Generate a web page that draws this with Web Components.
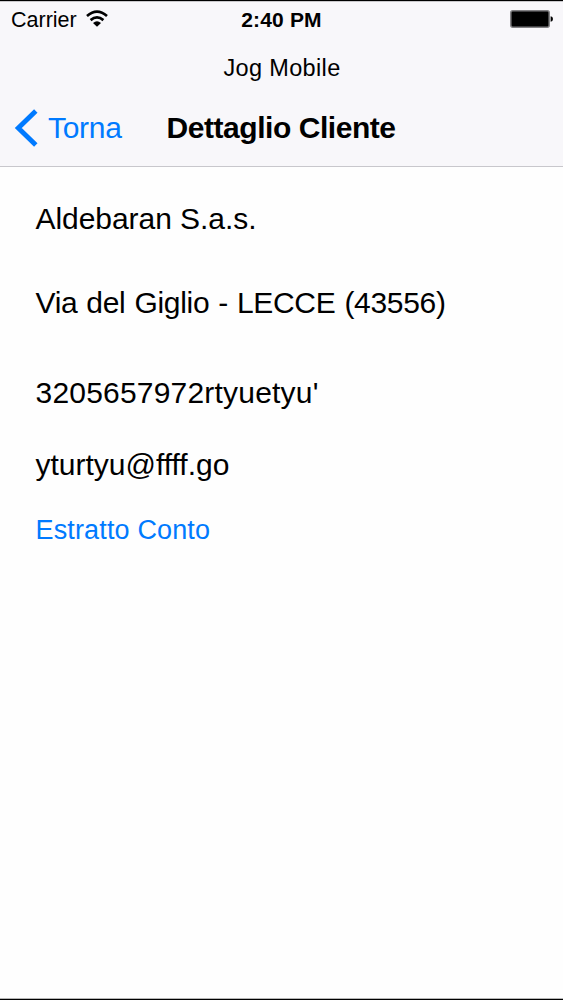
<!DOCTYPE html>
<html lang="it">
<head>
<meta charset="utf-8">
<title>Jog Mobile</title>
<style>
  html, body {
    margin: 0;
    height: 100%;
  }

  body {
    background: #000;
    overflow: hidden;
    font-family: "Liberation Sans", Arial, sans-serif;
    color: #000;
  }
</style>
</head>
<body>
<phone-screen>
  <status-bar slot="top" carrier="Carrier" time="2:40 PM"></status-bar>
  <nav-bar slot="top" back="Torna">
    <span slot="prompt">Jog Mobile</span>
    Dettaglio Cliente
  </nav-bar>
  <detail-row style="--gap: 34px; --tracking: -0.05px">Aldebaran S.a.s.</detail-row>
  <detail-row style="--gap: 48px; --tracking: -0.32px; word-spacing: 1px">Via del Giglio - LECCE (43556)</detail-row>
  <detail-row style="--gap: 54px; --tracking: 0.2px">3205657972rtyuetyu'</detail-row>
  <detail-row style="--gap: 36px">yturtyu@ffff.go</detail-row>
  <detail-row kind="link" style="--gap: 29px; --tracking: 0.15px">Estratto Conto</detail-row>
</phone-screen>

<script>
class PhoneScreen extends HTMLElement {
  constructor() {
    super();
    this.attachShadow({ mode: "open" });
    this.shadowRoot.innerHTML = `
      <style>
        :host {
          display: flex;
          flex-direction: column;
          box-sizing: border-box;
          width: 100%;
          height: 100%;
          border-top: 1px solid #000;
          border-bottom: 1px solid #000;
          background: #fefefe;
        }

        header {
          box-sizing: border-box;
          height: 166px;
          background: #f8f7fa;
          border-top: 1px solid #c9c8cb;
          border-bottom: 1px solid #c8c7cc;
        }

        main {
          flex: 1;
          padding-left: 35.5px;
          border-bottom: 1px solid #b5b5b5;
        }
      </style>
      <header><slot name="top"></slot></header>
      <main><slot></slot></main>
    `;
  }
}

class StatusBar extends HTMLElement {
  connectedCallback() {
    if (!this.shadowRoot) this.attachShadow({ mode: "open" });
    this.shadowRoot.innerHTML = `
      <style>
        :host {
          display: grid;
          grid-template-columns: 1fr auto 1fr;
          align-items: center;
          height: 24px;
          padding: 5px 10px 0 11px;
          font-size: 21.5px;
          line-height: 24px;
        }

        .carrier {
          display: flex;
          align-items: center;
          gap: 9px;
        }

        .carrier span,
        .time {
          padding-top: 1px;
        }

        .time {
          padding-right: 1px;
          font-size: 21px;
          font-weight: bold;
          letter-spacing: 0.15px;
        }

        .battery {
          justify-self: end;
        }

        svg {
          display: block;
          margin-bottom: 2px;
        }
      </style>
      <div class="carrier">
        <span>${this.getAttribute("carrier")}</span>
        <svg width="22" height="18" viewBox="0 0 22 18">
          <g fill="none" stroke="#000" stroke-width="2.7">
            <path d="M1 6 Q11 -2.6 21 6"/>
            <path d="M4.6 10.1 Q11 4.7 17.4 10.1"/>
          </g>
          <path d="M7 13 Q11 9.6 15 13 L11 16.8 Z"/>
        </svg>
      </div>
      <span class="time">${this.getAttribute("time")}</span>
      <svg class="battery" width="43" height="18" viewBox="0 0 43 18">
        <rect x="0.8" y="0.8" width="38.4" height="16.4" rx="2" fill="#000" stroke="#818083" stroke-width="1.5"/>
        <path d="M40.6 6.2 Q43 6.5 43 9 Q43 11.5 40.6 11.8 Z"/>
      </svg>
    `;
  }
}

class NavBar extends HTMLElement {
  connectedCallback() {
    if (!this.shadowRoot) this.attachShadow({ mode: "open" });
    this.shadowRoot.innerHTML = `
      <style>
        :host {
          display: block;
        }

        .prompt {
          margin-top: 23px;
          padding-left: 1px;
          text-align: center;
          font-size: 23.5px;
          line-height: 28px;
          letter-spacing: 0.35px;
        }

        .bar {
          display: grid;
          grid-template-columns: 152.5px auto 1fr;
          align-items: center;
          margin-top: 28px;
          padding-left: 14px;
          font-size: 30px;
          line-height: 36px;
        }

        .back {
          display: flex;
          align-items: center;
          gap: 10px;
          color: #007aff;
          letter-spacing: -0.3px;
        }

        .back svg {
          margin: -1px 0;
        }

        .title {
          font-weight: bold;
          letter-spacing: -0.45px;
          white-space: nowrap;
        }
      </style>
      <div class="prompt"><slot name="prompt"></slot></div>
      <div class="bar">
        <div class="back">
          <svg width="24" height="38" viewBox="0 0 24 38">
            <path d="M21.8 2 L4.3 19 L21.8 36" fill="none" stroke="#007aff" stroke-width="4.9"/>
          </svg>
          <span>${this.getAttribute("back")}</span>
        </div>
        <div class="title"><slot></slot></div>
      </div>
    `;
  }
}

class DetailRow extends HTMLElement {
  constructor() {
    super();
    this.attachShadow({ mode: "open" });
    this.shadowRoot.innerHTML = `
      <style>
        :host {
          display: block;
          padding-top: var(--gap);
          font-size: 30px;
          line-height: 36px;
          letter-spacing: var(--tracking, 0);
          white-space: nowrap;
          font-variant-ligatures: none;
        }

        :host([kind="link"]) {
          font-size: 27px;
          color: #007aff;
        }
      </style>
      <slot></slot>
    `;
  }
}

customElements.define("phone-screen", PhoneScreen);
customElements.define("status-bar", StatusBar);
customElements.define("nav-bar", NavBar);
customElements.define("detail-row", DetailRow);
</script>
</body>
</html>
